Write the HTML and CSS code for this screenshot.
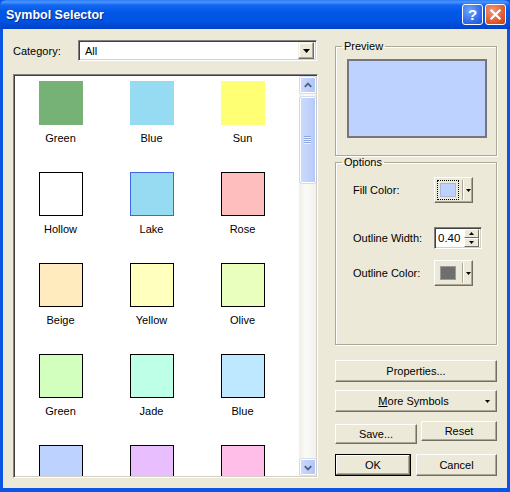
FILE: index.html
```html
<!DOCTYPE html>
<html>
<head>
<meta charset="utf-8">
<link rel="stylesheet" href="styles.css">
</head>
<body>
<div class="window">
  <div class="titlebar">
    <span class="title">Symbol Selector</span>
    <span class="tbtn help">?</span>
    <span class="tbtn close"><svg width="21" height="21" viewBox="0 0 21 21"><path d="M6 6 L15 15 M15 6 L6 15" stroke="#fff" stroke-width="2.4" stroke-linecap="square"/></svg></span>
  </div>
  <div class="client">
    <div class="left">
      <div class="catrow">
        <span class="catlabel">Category:</span>
        <div class="combo">
          <span class="combotext">All</span>
          <span class="dropbtn"><svg width="7" height="4" viewBox="0 0 7 4"><polygon points="0,0 7,0 3.5,4" fill="#000"/></svg></span>
        </div>
      </div>
      <div class="list">
        <div class="grid">
          <div class="cell"><div class="swatch" style="background:#76b276"></div><span class="lbl">Green</span></div>
          <div class="cell"><div class="swatch" style="background:#97dbf2"></div><span class="lbl">Blue</span></div>
          <div class="cell"><div class="swatch" style="background:#ffff73"></div><span class="lbl">Sun</span></div>
          <div class="cell"><div class="swatch b" style="background:#ffffff"></div><span class="lbl">Hollow</span></div>
          <div class="cell"><div class="swatch lake"></div><span class="lbl">Lake</span></div>
          <div class="cell"><div class="swatch b" style="background:#ffbebe"></div><span class="lbl">Rose</span></div>
          <div class="cell"><div class="swatch b" style="background:#ffebbe"></div><span class="lbl">Beige</span></div>
          <div class="cell"><div class="swatch b" style="background:#ffffbe"></div><span class="lbl">Yellow</span></div>
          <div class="cell"><div class="swatch b" style="background:#e9ffbe"></div><span class="lbl">Olive</span></div>
          <div class="cell"><div class="swatch b" style="background:#d3ffbe"></div><span class="lbl">Green</span></div>
          <div class="cell"><div class="swatch b" style="background:#beffe8"></div><span class="lbl">Jade</span></div>
          <div class="cell"><div class="swatch b" style="background:#bee8ff"></div><span class="lbl">Blue</span></div>
          <div class="cell"><div class="swatch b" style="background:#bed2ff"></div></div>
          <div class="cell"><div class="swatch b" style="background:#e8beff"></div></div>
          <div class="cell"><div class="swatch b" style="background:#ffbee8"></div></div>
        </div>
        <div class="scrollbar">
          <div class="sbtn"><svg width="15" height="15" viewBox="0 0 15 15"><path d="M4 9 L7.5 5.5 L11 9" stroke="#4d6185" stroke-width="2" fill="none"/></svg></div>
          <div class="thumb"><span class="grip"></span></div>
          <div class="sbtn down"><svg width="15" height="15" viewBox="0 0 15 15"><path d="M4 6 L7.5 9.5 L11 6" stroke="#4d6185" stroke-width="2" fill="none"/></svg></div>
        </div>
      </div>
    </div>
    <div class="right">
      <fieldset class="group preview-group">
        <legend>Preview</legend>
        <div class="preview"></div>
      </fieldset>
      <fieldset class="group options">
        <legend>Options</legend>
        <div class="optrow fill">
          <span class="optlabel">Fill Color:</span>
          <div class="colorbtn"><span class="focus"><span class="cswatch fillc"></span></span><span class="sep"></span><svg class="carrow" width="5" height="3" viewBox="0 0 5 3"><polygon points="0,0 5,0 2.5,3" fill="#000"/></svg></div>
        </div>
        <div class="optrow width">
          <span class="optlabel">Outline Width:</span>
          <div class="spin"><span class="spintext">0.40</span><span class="spinbtns"><span class="sp"><svg width="5" height="3" viewBox="0 0 5 3"><polygon points="0,3 5,3 2.5,0" fill="#000"/></svg></span><span class="sp"><svg width="5" height="3" viewBox="0 0 5 3"><polygon points="0,0 5,0 2.5,3" fill="#000"/></svg></span></span></div>
        </div>
        <div class="optrow ocolor">
          <span class="optlabel">Outline Color:</span>
          <div class="colorbtn"><span class="nofocus"><span class="cswatch outc"></span></span><span class="sep"></span><svg class="carrow" width="5" height="3" viewBox="0 0 5 3"><polygon points="0,0 5,0 2.5,3" fill="#000"/></svg></div>
        </div>
      </fieldset>
      <div class="btn wide props">Properties...</div>
      <div class="btn wide more"><span class="moretext"><u>M</u>ore Symbols</span><svg width="5" height="3" viewBox="0 0 5 3"><polygon points="0,0 5,0 2.5,3" fill="#000"/></svg></div>
      <div class="btnrow r1">
        <div class="btn save">Save...</div>
        <div class="btn reset">Reset</div>
      </div>
      <div class="btnrow r2">
        <div class="btn ok">OK</div>
        <div class="btn cancel">Cancel</div>
      </div>
    </div>
  </div>
</div>
</body>
</html>
```
FILE: styles.css
```css
* { box-sizing: border-box; }
body { margin: 0; font-family: "Liberation Sans", Arial, sans-serif; font-size: 11px; color: #000; }

.window {
  width: 510px; height: 492px;
  background: #0a55e3;
  display: flex; flex-direction: column;
}
.titlebar {
  height: 29px; flex: none;
  background: linear-gradient(#2a7bf3 0, #4a95ff 2px, #1466f0 5px, #0058e8 12px, #0054e3 20px, #0049d4 26px, #0040c2 29px);
  display: flex; align-items: center;
  padding: 0 4px 0 6px;
  border-radius: 6px 6px 0 0;
}
.title {
  flex: 1;
  color: #fff; font-weight: bold; font-size: 12.5px;
  text-shadow: 1px 1px 0 #0a2a8c;
  padding-top: 1px;
}
.tbtn {
  width: 21px; height: 21px;
  border: 1px solid #fff; border-radius: 3px;
  display: flex; align-items: center; justify-content: center;
  margin-left: 2px;
}
.help {
  background: radial-gradient(circle at 35% 30%, #6fa5ff, #2a66e8 70%, #1f55d0);
  color: #fff; font-weight: bold; font-size: 15px;
}
.close {
  background: radial-gradient(circle at 35% 30%, #f0997a, #e0582c 65%, #c43d15);
}
.close svg { display: block; }

.client {
  flex: 1;
  margin: 0 3px 4px 3px;
  background: #ece9d8;
  padding: 11px 10px 10px 10px;
  display: flex; gap: 17px;
}
.left { width: 305px; display: flex; flex-direction: column; }
.catrow { display: flex; align-items: center; height: 21px; }
.catlabel { width: 65px; }
.combo {
  width: 239px; height: 21px;
  background: #fff;
  border: 1px solid; border-color: #808080 #fff #fff #808080;
  box-shadow: inset 1px 1px 0 #404040, inset -1px -1px 0 #d4d0c8;
  display: flex; align-items: center;
  padding: 2px;
}
.combotext { flex: 1; padding-left: 4px; }
.dropbtn {
  width: 16px; height: 17px;
  background: #ece9d8;
  border: 1px solid; border-color: #f1efe2 #716f64 #716f64 #f1efe2;
  box-shadow: inset -1px -1px 0 #aca899, inset 1px 1px 0 #fff;
  display: flex; align-items: center; justify-content: center;
}
.dropbtn svg { display: block; }

.list {
  margin-top: 13px; height: 404px;
  background: #fff;
  border: 1px solid; border-color: #808080 #fff #fff #808080;
  box-shadow: inset 1px 1px 0 #404040, inset -1px -1px 0 #d4d0c8;
  padding: 1px;
  display: flex; overflow: hidden;
}
.grid {
  flex: 1;
  display: grid;
  grid-template-columns: repeat(3, 91px);
  grid-auto-rows: 91px;
  align-content: start;
  overflow: hidden;
}
.cell { display: flex; flex-direction: column; align-items: center; padding-top: 5px; }
.swatch { width: 44px; height: 44px; flex: none; }
.swatch.b { border: 1px solid #000; }
.swatch.lake { background: #97dbf2; border: 1px solid #4065eb; }
.lbl { margin-top: 7px; line-height: 13px; }

.scrollbar {
  width: 17px;
  background: linear-gradient(to right, #eeede5, #fbfbf8 40%, #f3f1ec);
  display: flex; flex-direction: column; align-items: center;
  padding: 1px 0;
}
.sbtn {
  width: 16px; height: 16px;
  border: 1px solid #fff; border-radius: 2px;
  background: linear-gradient(to right, #c9d8fc, #bccdf8 60%, #b1c4f3);
  display: flex; align-items: center; justify-content: center;
  box-shadow: 0 0 0 0.5px #b4c6f2;
}
.sbtn svg { display: block; }
.sbtn.down { margin-top: auto; }
.thumb {
  width: 16px; height: 86px; margin-top: 4px;
  border: 1px solid #fff; border-radius: 2px;
  background: linear-gradient(to right, #cad9fd, #c0d1fb 60%, #b6c8f6);
  box-shadow: 0 0 0 0.5px #a9bdf0;
  display: flex; align-items: center; justify-content: center;
}
.grip {
  width: 7px; height: 8px;
  background: repeating-linear-gradient(#8ca4de 0, #8ca4de 1px, #eef3ff 1px, #eef3ff 2px);
}

.right { width: 162px; display: flex; flex-direction: column; }
fieldset.group {
  margin: 0;
  border: 1px solid #aca899;
  box-shadow: 1px 1px 0 #fff, inset 1px 1px 0 #fff;
  min-width: 0;
}
legend { padding: 0 2px; margin-left: -5px; line-height: 13px; }
.preview-group { padding: 6px 9px 17px 11px; }
.preview {
  width: 140px; height: 79px;
  background: #bed2ff;
  border: 2px solid #76767e;
}
.options { margin-top: 9px; padding: 8px 9px 58px 11px; }
.optrow { display: flex; align-items: center; }
.optlabel { width: 87px; padding-left: 6px; }
.optrow.width { margin-top: 24px; }
.optrow.ocolor { margin-top: 11px; }
.colorbtn {
  width: 39px; height: 26px;
  background: #ece9d8;
  border: 1px solid; border-color: #fff #716f64 #716f64 #fff;
  box-shadow: inset -1px -1px 0 #aca899;
  display: flex; align-items: center;
  padding-left: 2px;
}
.focus, .nofocus { width: 22px; height: 20px; padding: 2px; display: flex; }
.focus { border: 1px dotted #000; }
.nofocus { border: 1px solid transparent; }
.cswatch { flex: 1; }
.fillc { background: #bed2ff; border: 1px solid #aab8d8; }
.outc { background: #6e6e6e; border: 1px solid #9b9b9b; }
.sep { width: 2px; height: 20px; margin-left: 3px; border-left: 1px solid #aca899; border-right: 1px solid #fff; }
.carrow { margin-left: 2px; display: block; }
.spin {
  width: 48px; height: 22px;
  background: #fff;
  border: 1px solid; border-color: #808080 #fff #fff #808080;
  box-shadow: inset 1px 1px 0 #404040, inset -1px -1px 0 #d4d0c8;
  display: flex; align-items: center;
  padding: 2px;
}
.spintext { flex: 1; padding-left: 1px; font-size: 11.5px; }
.spinbtns { width: 15px; height: 18px; display: flex; flex-direction: column; }
.sp {
  flex: 1;
  background: #ece9d8;
  border: 1px solid; border-color: #fff #716f64 #716f64 #fff;
  display: flex; align-items: center; justify-content: center;
}
.sp svg { display: block; }

.btn {
  height: 22px;
  background: #ece9d8;
  border: 1px solid; border-color: #fff #716f64 #716f64 #fff;
  box-shadow: inset -1px -1px 0 #aca899;
  display: flex; align-items: center; justify-content: center;
}
.props { margin-top: 15px; }
.more { margin-top: 8px; }
.more .moretext { flex: 1; text-align: center; padding-left: 6px; }
.more svg { margin-right: 6px; display: block; }
.btnrow { display: flex; justify-content: space-between; }
.r1 { margin-top: 9px; height: 24px; }
.save { width: 82px; height: 20px; margin-top: 3px; }
.reset { width: 76px; height: 20px; }
.r2 { margin-top: 9px; }
.ok { width: 76px; height: 22px; border: 1px solid #000; box-shadow: inset -1px -1px 0 #716f64, inset 1px 1px 0 #fff, inset -2px -2px 0 #aca899; }
.cancel { width: 81px; height: 22px; }
```
